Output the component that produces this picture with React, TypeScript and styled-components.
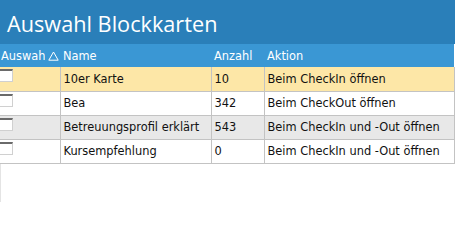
import styled, { createGlobalStyle } from "styled-components";

const GlobalStyle = createGlobalStyle`
  html, body {
    margin: 0;
    padding: 0;
    background: #ffffff;
  }
  body {
    font-family: "DejaVu Sans", Verdana, sans-serif;
  }
`;

const Page = styled.main`
  width: 455px;
  height: 202px;
  display: flex;
  flex-direction: column;
  overflow: hidden;
`;

const TitleBar = styled.header`
  height: 44px;
  flex-shrink: 0;
  background-color: #2a7fb9;
  display: flex;
  align-items: center;
  padding-left: 7px;
  box-sizing: border-box;
`;

const Title = styled.h1`
  margin: 0;
  color: #ffffff;
  font-family: "Open Sans", sans-serif;
  font-size: 21.7px;
  font-weight: 400;
  padding-top: 2px;
`;

const GridArea = styled.section`
  flex: 1;
  display: flex;
  flex-direction: column;
`;

const Filler = styled.div`
  flex: 1;
  border-left: 1px solid #e4e4e4;
`;

const Table = styled.table`
  width: 454px;
  border-collapse: collapse;
  table-layout: fixed;
  font-size: 11.4px;
`;

const HeadCell = styled.th<{ $w: number }>`
  width: ${(p) => p.$w}px;
  height: 23px;
  background-color: #3a97d4;
  color: #ffffff;
  font-weight: 400;
  text-align: left;
  padding: 0 0 0 3px;
  white-space: nowrap;
  overflow: hidden;
  box-sizing: border-box;
`;

const SortHead = styled.div`
  display: flex;
  align-items: center;
  gap: 3px;
  margin-left: -2px;
`;

const Clip = styled.span`
  overflow: hidden;
  max-width: 44px;
  white-space: nowrap;
`;

const SortIcon = styled.svg`
  flex-shrink: 0;
  width: 11px;
  height: 10px;
`;

const Row = styled.tr<{ $tone: "selected" | "plain" | "alt" }>`
  background-color: ${(p) =>
    p.$tone === "selected" ? "#fde7a7" : p.$tone === "alt" ? "#e8e8e8" : "#ffffff"};
`;

const Cell = styled.td`
  height: 24px;
  padding: 0 0 0 3px;
  color: #111111;
  border-bottom: 1px solid #c3c3c3;
  border-right: 1px solid #c3c3c3;
  white-space: nowrap;
  overflow: hidden;
  box-sizing: border-box;
  vertical-align: middle;
`;

const CheckCell = styled.td`
  height: 24px;
  padding: 0;
  border-bottom: 1px solid #c3c3c3;
  border-right: 1px solid #c3c3c3;
  vertical-align: top;
  box-sizing: border-box;
`;

const CheckBox = styled.span`
  display: block;
  width: 13px;
  height: 13px;
  margin-top: 2px;
  background: #ffffff;
  border-top: 2px solid #6a6a6a;
  border-right: 1px solid #d0d0d0;
  border-bottom: 1px solid #d0d0d0;
  box-sizing: border-box;
`;

const rows = [
  { name: "10er Karte", count: "10", action: "Beim CheckIn öffnen", tone: "selected" as const },
  { name: "Bea", count: "342", action: "Beim CheckOut öffnen", tone: "plain" as const },
  { name: "Betreuungsprofil erklärt", count: "543", action: "Beim CheckIn und -Out öffnen", tone: "alt" as const },
  { name: "Kursempfehlung", count: "0", action: "Beim CheckIn und -Out öffnen", tone: "plain" as const },
];

function App() {
  return (
    <Page>
      <GlobalStyle />
      <TitleBar>
        <Title>Auswahl Blockkarten</Title>
      </TitleBar>
      <GridArea>
        <Table>
          <thead>
            <tr>
              <HeadCell $w={60}>
                <SortHead>
                  <Clip>Auswahl</Clip>
                  <SortIcon viewBox="0 0 11 10">
                    <path d="M5.5 1 L10.2 9.2 L0.8 9.2 Z" fill="none" stroke="#ffffff" strokeWidth="1" />
                  </SortIcon>
                </SortHead>
              </HeadCell>
              <HeadCell $w={151}>Name</HeadCell>
              <HeadCell $w={53}>Anzahl</HeadCell>
              <HeadCell $w={190}>Aktion</HeadCell>
            </tr>
          </thead>
          <tbody>
            {rows.map((r) => (
              <Row key={r.name} $tone={r.tone}>
                <CheckCell>
                  <CheckBox />
                </CheckCell>
                <Cell>{r.name}</Cell>
                <Cell>{r.count}</Cell>
                <Cell>{r.action}</Cell>
              </Row>
            ))}
          </tbody>
        </Table>
        <Filler />
      </GridArea>
    </Page>
  );
}

export default App;
